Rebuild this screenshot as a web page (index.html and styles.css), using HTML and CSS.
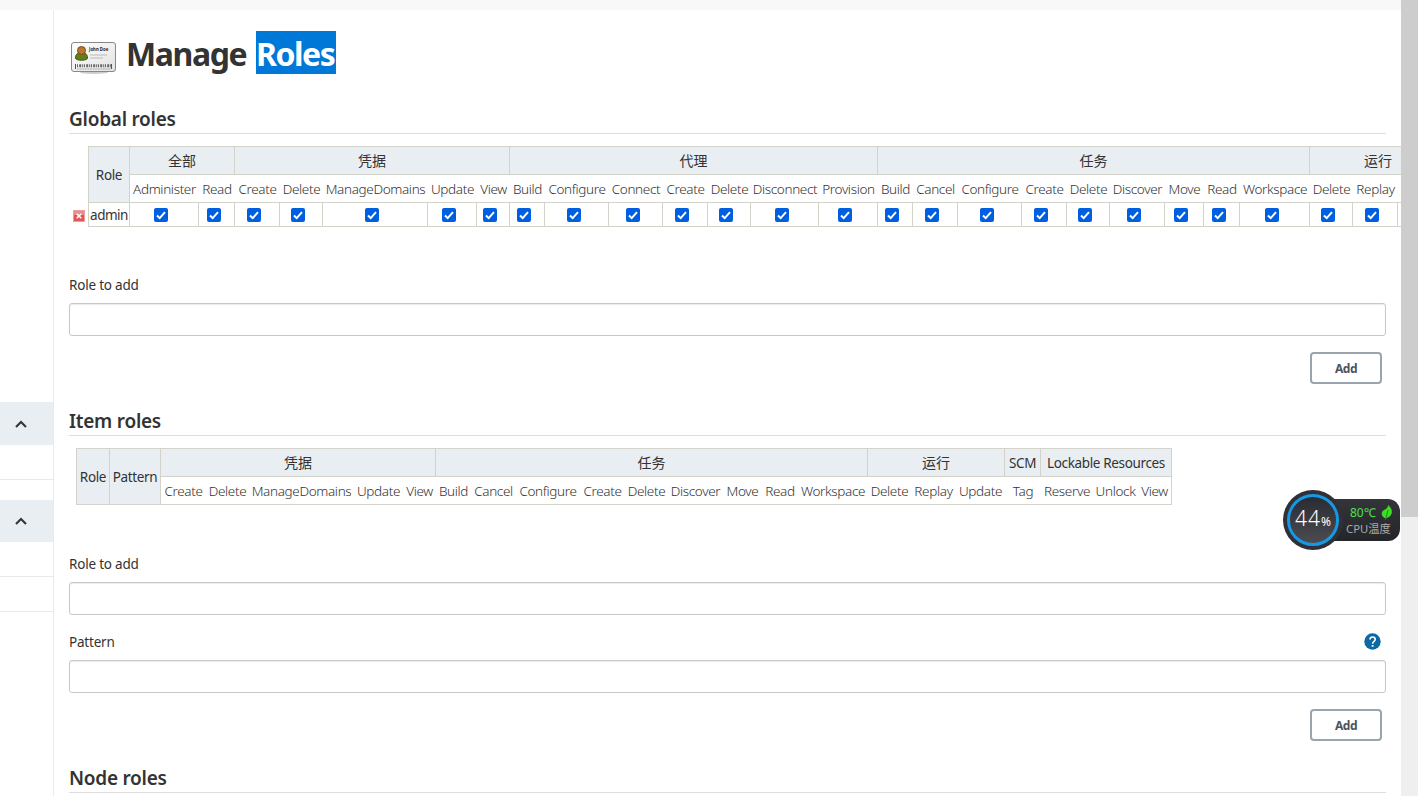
FILE: index.html
```
<!DOCTYPE html>
<html lang="zh-CN">
<head>
<meta charset="utf-8">
<title>Manage Roles</title>
<link rel="stylesheet" href="styles.css">
</head>
<body>
<svg class="defs" width="0" height="0">
  <symbol id="check" viewBox="0 0 14 14"><rect width="14" height="14" rx="2" fill="#005fe0"/><path d="M3 7.5l2.700 2.600L11 4.200" fill="none" stroke="#fff" stroke-width="2"/></symbol>
  <symbol id="chevron" viewBox="0 0 12 8"><path d="M1 7l5-5 5 5" fill="none" stroke="#333" stroke-width="2"/></symbol>
</svg>
<div class="page">
  <div class="topbar"></div>
  <div class="columns">
    <aside class="side">
      <div class="pane-head"><svg width="12" height="8"><use href="#chevron"/></svg></div>
      <div class="pane-row first"></div>
      <div class="pane-gap"></div>
      <div class="pane-head second"><svg width="12" height="8"><use href="#chevron"/></svg></div>
      <div class="pane-row"></div>
      <div class="pane-row"></div>
    </aside>
    <main class="content">
      <h1 class="title">
        <svg class="card" width="46" height="34" viewBox="0 0 46 34">
          <defs>
            <linearGradient id="paper" x1="0" y1="0" x2="1" y2="1"><stop offset="0" stop-color="#fff"/><stop offset="1" stop-color="#e2e2e2"/></linearGradient>
          </defs>
          <ellipse cx="23" cy="31.500" rx="14" ry="1.400" fill="#ccc"/>
          <rect x=".5" y="1.500" width="44" height="29" rx="2.500" fill="url(#paper)" stroke="#888"/>
          <path d="M4.500 17c0-4 2.500-5.500 6-5.500s6 1.500 6 5.500c0 3-12 3-12 0z" fill="#5f7d1d" stroke="#3f5a0c"/>
          <circle cx="10.500" cy="9.500" r="4" fill="#b9772c" stroke="#7c4a12"/>
          <text class="card-name" x="18" y="10">John Doe</text>
          <path d="M19 14h17M19 17h13" stroke="#ccc" stroke-width="1.700"/>
          <path d="M4.500 23v5M40.500 23v5" stroke="#555"/>
          <path d="M6 24.800h34" stroke="#666" stroke-width="3" stroke-dasharray="1 1.200 2 1 1 .8"/>
          <path d="M6 28h34" stroke="#aaa" stroke-dasharray="2 .6"/>
        </svg>
        <span class="word manage">Manage</span><span class="word picked">Roles</span>
      </h1>

      <h2>Global roles</h2>
      <div class="global">
        <svg class="remove" width="12" height="12" viewBox="0 0 12 12"><rect x=".5" y=".5" width="11" height="11" fill="#df5656" stroke="#e7a0a0"/><rect x="1" y="1" width="10" height="4" fill="#e88c8c"/><path d="M3.700 3.700l4.600 4.600M8.300 3.700l-4.600 4.600" stroke="#fff" stroke-width="1.500"/></svg>
        <div class="grid grid-global">
          <div class="head tall">Role</div>
          <div class="head zh s2">全部</div><div class="head zh s5">凭据</div><div class="head zh s7">代理</div><div class="head zh s9">任务</div><div class="head zh s3">运行</div>
          <div class="perm">Administer</div><div class="perm">Read</div>
          <div class="perm">Create</div><div class="perm">Delete</div><div class="perm">ManageDomains</div><div class="perm">Update</div><div class="perm">View</div>
          <div class="perm">Build</div><div class="perm">Configure</div><div class="perm">Connect</div><div class="perm">Create</div><div class="perm">Delete</div><div class="perm">Disconnect</div><div class="perm">Provision</div>
          <div class="perm">Build</div><div class="perm">Cancel</div><div class="perm">Configure</div><div class="perm">Create</div><div class="perm">Delete</div><div class="perm">Discover</div><div class="perm">Move</div><div class="perm">Read</div><div class="perm">Workspace</div>
          <div class="perm">Delete</div><div class="perm">Replay</div><div class="perm"></div>
          <div class="cell name">admin</div>
          <div class="cell"><svg><use href="#check"/></svg></div><div class="cell"><svg><use href="#check"/></svg></div><div class="cell"><svg><use href="#check"/></svg></div><div class="cell"><svg><use href="#check"/></svg></div><div class="cell"><svg><use href="#check"/></svg></div><div class="cell"><svg><use href="#check"/></svg></div><div class="cell"><svg><use href="#check"/></svg></div><div class="cell"><svg><use href="#check"/></svg></div><div class="cell"><svg><use href="#check"/></svg></div><div class="cell"><svg><use href="#check"/></svg></div><div class="cell"><svg><use href="#check"/></svg></div><div class="cell"><svg><use href="#check"/></svg></div><div class="cell"><svg><use href="#check"/></svg></div><div class="cell"><svg><use href="#check"/></svg></div><div class="cell"><svg><use href="#check"/></svg></div><div class="cell"><svg><use href="#check"/></svg></div><div class="cell"><svg><use href="#check"/></svg></div><div class="cell"><svg><use href="#check"/></svg></div><div class="cell"><svg><use href="#check"/></svg></div><div class="cell"><svg><use href="#check"/></svg></div><div class="cell"><svg><use href="#check"/></svg></div><div class="cell"><svg><use href="#check"/></svg></div><div class="cell"><svg><use href="#check"/></svg></div><div class="cell"><svg><use href="#check"/></svg></div><div class="cell"><svg><use href="#check"/></svg></div><div class="cell"></div>
        </div>
      </div>
      <div class="label after-global">Role to add</div>
      <input class="field" type="text">
      <button class="add">Add</button>

      <h2 class="next">Item roles</h2>
      <div class="grid grid-item">
        <div class="head tall">Role</div><div class="head tall pattern">Pattern</div>
        <div class="head zh s5">凭据</div><div class="head zh s9">任务</div><div class="head zh s3">运行</div><div class="head">SCM</div><div class="head s3">Lockable Resources</div>
        <div class="perm">Create</div><div class="perm">Delete</div><div class="perm">ManageDomains</div><div class="perm">Update</div><div class="perm">View</div>
        <div class="perm">Build</div><div class="perm">Cancel</div><div class="perm">Configure</div><div class="perm">Create</div><div class="perm">Delete</div><div class="perm">Discover</div><div class="perm">Move</div><div class="perm">Read</div><div class="perm">Workspace</div>
        <div class="perm">Delete</div><div class="perm">Replay</div><div class="perm">Update</div>
        <div class="perm">Tag</div>
        <div class="perm">Reserve</div><div class="perm">Unlock</div><div class="perm">View</div>
      </div>
      <div class="label after-item">Role to add</div>
      <input class="field" type="text">
      <div class="label after-field">Pattern
        <svg width="17" height="17" viewBox="0 0 17 17"><circle cx="8.500" cy="8.500" r="8.200" fill="#0b6aa2"/><path d="M6 6.600C6 3 11.200 3.200 11.200 6.400c0 2-2.600 2.100-2.600 4.300" fill="none" stroke="#fff" stroke-width="1.600"/><rect x="7.700" y="12" width="1.800" height="1.800" fill="#fff"/></svg>
      </div>
      <input class="field" type="text">
      <button class="add">Add</button>

      <h2 class="next">Node roles</h2>
    </main>
  </div>
</div>
<div class="scrollbar"><div class="thumb"></div></div>

<div class="monitor">
  <div class="pill">
    <div class="temp">80℃<svg width="12" height="15" viewBox="0 0 12 15"><path d="M7 0c5 4 5 9 1 12L4.500 13.500C-1 11 0 6 4 4.500 6 3.500 7 2 7 0z" fill="#3fdc26"/><path d="M7 5L4.500 15" stroke="#1d8a12"/></svg></div>
    <div class="caption">CPU温度</div>
  </div>
  <div class="dial"><div class="ring"><span class="num">44</span><span class="pct">%</span></div></div>
</div>
</body>
</html>
```
FILE: styles.css
```
* { box-sizing: border-box; }
body {
  margin: 0;
  width: 1418px;
  height: 796px;
  overflow: hidden;
  display: flex;
  background: #fff;
  color: #333;
  font: 13.5px "Noto Sans", "Noto Sans CJK SC", sans-serif;
  letter-spacing: -0.2px;
}
.defs { position: absolute; }
.page { width: 1401px; height: 796px; overflow: hidden; }
.topbar { height: 10px; background: #f8f8f8; }
.columns { display: flex; height: 786px; }

.side { width: 54px; flex: none; border-right: 1px solid #eaeaea; padding-top: 392px; }
.pane-head { height: 43px; background: #e9eef2; padding: 18px 0 0 15px; }
.pane-head.second { height: 42px; padding-top: 17px; }
.pane-head svg { display: block; }
.pane-row { height: 35px; border-bottom: 1px solid #eaeaea; }
.pane-gap { height: 20px; }

.content { width: 1347px; padding: 0 15px; overflow: hidden; flex: none; }
.title { margin: 21px 0 31px; height: 43px; display: flex; font-size: 32px; font-weight: 700; }
.card { margin: 10px 0 0 2px; flex: none; }
.card-name { font: 700 4.300px "Noto Sans", sans-serif; letter-spacing: 0; fill: #222; }
.word { height: 43px; line-height: 46px; white-space: nowrap; }
.manage { margin-left: 9px; width: 130px; letter-spacing: -1.400px; }
.picked { width: 80px; background: #0078d7; color: #fff; letter-spacing: -1.500px; }

h2 { margin: 0 0 12px; height: 29px; border-bottom: 1px solid #dedede; font-size: 19px; font-weight: 600; line-height: 28px; letter-spacing: -0.25px; }
h2.next { margin-top: 23px; line-height: 29px; }

.global { display: flex; margin-left: 4px; }
.remove { flex: none; margin: 64px 3px 0 0; }
.grid { display: grid; flex: none; width: max-content; border: solid #d3d3cb; border-width: 1px 0 0 1px; }
.grid-global {
  grid-template-columns: 41px 69px 36px 45px 43px 105px 49px 33px 35px 64px 54px 45px 43px 68px 59px 35px 45px 64px 45px 43px 55px 39px 36px 70px 43px 45px 49px;
  grid-template-rows: 28px 28px 24px;
}
.grid-item {
  margin-left: 7px;
  grid-template-columns: 33px 51px 45px 43px 105px 49px 33px 35px 45px 64px 45px 43px 55px 39px 36px 70px 43px 45px 49px 36px 52px 45px 34px;
  grid-template-rows: 28px 28px;
}
.grid > div { display: flex; align-items: center; justify-content: center; white-space: nowrap; min-width: 0; border-bottom: 1px solid #d3d3cb; }
.head, .cell { border-right: 1px solid #d3d3cb; }
.head { background: #e9eef2; letter-spacing: -0.350px; }
.zh { font-size: 14px; letter-spacing: 0; padding-bottom: 1px; }
.tall { grid-row: span 2; }
.s2 { grid-column: span 2; }
.s3 { grid-column: span 3; }
.s5 { grid-column: span 5; }
.s7 { grid-column: span 7; }
.s9 { grid-column: span 9; }
.perm { font-weight: 300; letter-spacing: -0.350px; }
.perm:last-child { border-right: 1px solid #d3d3cb; }
.cell svg { width: 14px; height: 14px; margin-right: 6px; }
.name { letter-spacing: -0.500px; }

.label { height: 20px; line-height: 20px; display: flex; justify-content: space-between; margin-bottom: 8px; }
.label svg { margin: 1px 5px 0 0; }
.after-global { margin-top: 48px; }
.after-item { margin-top: 49px; }
.after-field { margin-top: 17px; }
.field { display: block; width: 1317px; height: 33px; border: 1px solid #c8c8c8; border-radius: 3px; background: #fff; box-shadow: inset 0 1px 1px rgba(0, 0, 0, .08); }
.add { display: block; width: 72px; height: 32px; margin: 16px 4px 0 auto; padding: 1px 0 0; border: 2px solid #98a5ae; border-radius: 4px; background: #fff; color: #4d545d; font: 700 12px "Noto Sans", sans-serif; letter-spacing: -0.500px; }

.scrollbar { width: 17px; height: 796px; background: #efefef; }
.thumb { height: 517px; background: #cdcdcd; }

.monitor { position: absolute; left: 1283px; top: 490px; width: 117px; height: 60px; letter-spacing: 0; }
.pill { position: absolute; left: 30px; top: 9px; width: 87px; height: 42px; border-radius: 12px; background: linear-gradient(#34353a, #242529); padding: 6px 0 0 33px; color: #aaa; font-size: 11.300px; line-height: 16px; white-space: nowrap; }
.temp { display: flex; gap: 5px; padding-left: 4px; color: #4fe04f; font-size: 12px; }
.dial { position: absolute; left: 0; top: 0; width: 60px; height: 60px; border-radius: 50%; background: #303137; padding: 4px; }
.ring { width: 52px; height: 52px; border-radius: 50%; border: 3px solid #1798e5; background: linear-gradient(#2b2c33, #4b4c52); color: #fff; display: flex; align-items: baseline; justify-content: center; line-height: 42px; }
.num { font-size: 21px; font-weight: 350; letter-spacing: 1px; }
.pct { font-size: 12px; }
```
